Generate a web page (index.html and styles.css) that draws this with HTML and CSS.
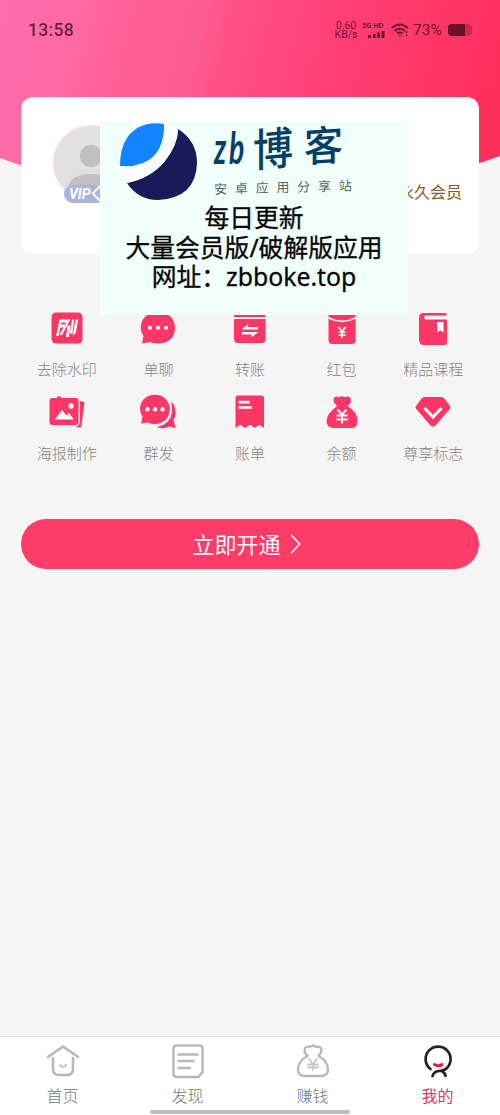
FILE: index.html
```html
<!DOCTYPE html>
<html lang="zh-CN">
<head>
<meta charset="utf-8">
<title>我的</title>
<link rel="stylesheet" href="styles.css">
</head>
<body>
<div class="screen">
  <header class="hero">
    <div class="status">
      <span class="clock">13:58</span>
      <div class="signals">
        <span class="speed">0.60<br>KB/s</span>
        <div class="cell"><span class="net">5G HD</span>
          <svg class="bars" width="17" height="7" viewBox="0 0 17 7"><path d="M0 4h3v3H0zM5 3h2.600v4H5zM9 1.500h3V7H9zM13.500 0h3v7h-3z"/></svg>
        </div>
        <svg class="wifi" width="18" height="14" viewBox="0 0 18 14" fill="none" stroke="currentColor" stroke-width="1.900"><path d="M.8 5q8-7.200 16 0M3.600 8q5.300-4.600 10.400 0M6 10.600q2.800-2.400 5.600 0"/><path d="M7 12h3.600L8.800 13.500z" fill="currentColor" stroke="none"/><path d="M15.500 8v2M15.500 11.500v1.800" stroke-width="1.500"/></svg>
        <span class="pct">73%</span>
        <span class="battery"><span class="charge"></span></span>
      </div>
    </div>
  </header>
  <main>
    <section class="card">
      <div class="avatar">
        <svg width="76" height="78" viewBox="0 0 76 78">
          <circle cx="38" cy="38" r="37" fill="#e1e1e1" stroke="#f8d9df" stroke-width="2"/>
          <circle cx="38" cy="31" r="11" fill="#c0c0c0"/>
          <path d="M15 67V63Q17 49 38 49T61 63V67Q38 82 15 67z" fill="#c0c0c0"/>
        </svg>
        <span class="vip">VIP<i class="gem"></i></span>
      </div>
      <span class="member">永久会员</span>
    </section>
    <section class="grid">
      <div class="item"><svg viewBox="0 0 36 36"><rect x="2.500" y="2.500" width="31" height="31" rx="4.500" fill="#fc3766"/><g fill="#fff"><path d="M10.500 9.500h8l-1 3h-5l-.5 2h4l-1.500 3h-3.200L9.700 26H7z"/><path d="M19 9h2.500L13 25h-2.500zM18.500 15.500h3L20 27h-3zM23 9.500h2l-1.500 14H21zM26.500 9.500h2.700L26.700 23l-3 3z"/></g></svg><span>去除水印</span></div>
      <div class="item"><svg viewBox="0 0 36 36"><path fill="#fc3766" d="M18 2C28 2 35 8 35 18S28 33.500 18 33.500Q13.500 33.500 10 32L2 33.500 3.500 26Q.7 22 .7 18C.7 8 8 2 18 2z"/><g fill="#fff"><circle cx="10" cy="17.700" r="2"/><circle cx="18" cy="17.700" r="2"/><circle cx="26" cy="17.700" r="2"/></g></svg><span>单聊</span></div>
      <div class="item"><svg viewBox="0 0 36 36"><path fill="#fc3766" d="M5 3h26q2.500 0 2.500 3v1H2V6q0-3 3-3zM2 9h31.500v20q0 4-4 4H6q-4 0-4-4z"/><path fill="#fff" d="M9.500 19.500L16.500 14l-.8 3H26v2.500zM26.500 22H10v2.500h10L19 27.500z"/></svg><span>转账</span></div>
      <div class="item"><svg viewBox="0 0 36 36"><path fill="#fc3766" d="M4.500 3h27v4q-13 7-27 0zM4.500 8.800q13.500 7 27 0V30q0 4-4 4h-19q-4 0-4-4z"/><path d="M14.500 17l3.500 4.500 3.500-4.500M14.500 22h7M14.500 25h7M18 21.500V28" fill="none" stroke="#fff" stroke-width="1.700"/></svg><span>红包</span></div>
      <div class="item"><svg viewBox="0 0 36 36"><path fill="#fc3766" d="M8.500 3H31l1 1.200-1.200 1.300H11q-1.800 0-1.800 2T11 9.500h21V33l-1.500 2H9q-5 0-5-5V8q0-5 4.500-5z"/><path fill="#fff" d="M22 12h6.500v10.500l-3.200-2-3.300 2z"/></svg><span>精品课程</span></div>
      <div class="item"><svg viewBox="0 0 36 36"><path fill="#fc3766" d="M8 2.500h4V4H8zM3 4h24q2.500 0 2.500 2.500V28q0 3-3 3H3.500q-3 0-3-3V6.500Q.5 4 3 4zM31 7l4.500 1-3.200 24q-.3 2-2.300 1.600l-3.500-.6Q30.500 32 31 27z"/><path fill="#fff" d="M6 25.500l7-9.500 4.500 5.500 2.500-2.500 4.800 6.500z"/><circle cx="22" cy="12" r="2.700" fill="#fff"/></svg><span>海报制作</span></div>
      <div class="item"><svg viewBox="0 0 36 36"><path fill="#fc3766" d="M31 7.500Q36 11.500 35.500 19q-.2 4-2 7l2 8-6.500-1.500Q23 35.500 16.500 33 31 30 32 17 32.300 11 31 7.500zM15 .8c8.500 0 14.700 6 14.700 14.500S23.500 30 15 30q-4 0-7-1.600L1 29.500l1.500-6.700Q0 19.500 0 15C0 6.700 6.500.8 15 .8z"/><g fill="#fff"><circle cx="7.300" cy="15.300" r="2.200"/><circle cx="15" cy="15.300" r="2.200"/><circle cx="22.500" cy="15.300" r="2.200"/></g></svg><span>群发</span></div>
      <div class="item"><svg viewBox="0 0 36 36"><path fill="#fc3766" d="M5 1.500h25q2 0 2 2.500v30l-4.700-3.300-4.500 3.300-4.700-3.300L13 34l-4.700-3.300L3.500 34V4q0-2.500 1.500-2.500z"/><path d="M6.500 8.200h11M6.500 13.500H20" stroke="#fff" stroke-width="2.700"/></svg><span>账单</span></div>
      <div class="item"><svg viewBox="0 0 36 36"><path fill="#fc3766" d="M11 3q2.500-1 4 .3Q18 1 21 3.300 24 1.500 26.500 4L27 8l-3.500 4Q33.500 18 33.500 26.500T26 34H10Q2.500 34 2.500 27T13 12L9.500 8 10 4z"/><path d="M13.500 15.500L18 20.500l4.500-5M12.500 21.500h11M12.500 25.500h11M18 20.500v9" fill="none" stroke="#fff" stroke-width="2"/></svg><span>余额</span></div>
      <div class="item"><svg viewBox="0 0 36 36"><path fill="#fc3766" d="M9.500 3h17q1.500 0 2.500 1l6 8q1 1.300 0 2.800L20.500 31.500q-2.500 2.300-5 0L1 14.800Q0 13.300 1 12l6-8Q8 3 9.500 3z"/><path d="M9.500 14l8.500 9 8.500-9" fill="none" stroke="#fff" stroke-width="3"/></svg><span>尊享标志</span></div>
    </section>
    <div class="open"><span>立即开通</span><svg width="13" height="20" viewBox="0 0 13 20"><path d="M2 .7L10.700 10 2 19.300" fill="none" stroke="#fff" stroke-width="1.500"/></svg></div>
  </main>
  <nav class="tabs">
    <div class="tab"><svg viewBox="0 0 36 36" fill="none" stroke="#b8b8b8" stroke-width="2.600" stroke-linecap="round" stroke-linejoin="round"><path d="M3 14L18 3.500 33 14M8 15v11q0 6 6 6h8q6 0 6-6V15"/><path d="M15 22q3 4 6 0" stroke-width="1.700"/></svg><span>首页</span></div>
    <div class="tab"><svg viewBox="0 0 36 36" fill="none" stroke="#b8b8b8" stroke-width="2.500" stroke-linecap="round"><path d="M6.500 2.500h23q3 0 3 3V29L28.500 34h-22q-3 0-3-3V5.500q0-3 3-3z"/><path d="M8.500 11.500h19M8.500 18h15M8.500 25h11.500"/></svg><span>发现</span></div>
    <div class="tab"><svg viewBox="0 0 36 36" fill="none" stroke="#b8b8b8" stroke-width="2.300" stroke-linecap="round" stroke-linejoin="round"><path d="M10 5q2-2 4.500-1Q18 1.500 21.500 4 24 3 26 5L26.500 9l-3 4Q33 18 33 26.500 33 33 26 33H10q-7 0-7-6.500Q3 18 12.500 13l-3-4z"/><path stroke="#c7c7c7" stroke-width="1.800" d="M14 16l4 5 4-5M13 21.500h10M13 24.500h10M18 21v6"/></svg><span>赚钱</span></div>
    <div class="tab active"><svg viewBox="0 0 36 36" fill="none" stroke="#222" stroke-width="2.700" stroke-linecap="round"><path d="M10.500 26A12.500 12.500 0 1 1 25 26.500Q22.500 28 18.500 28 14 28.500 12.500 33M22.500 28.500Q25 30 25.500 33"/><path d="M14.500 21.500q4 2.500 7.500 0" stroke="#ed174f" stroke-width="3"/></svg><span>我的</span></div>
  </nav>
  <div class="home-bar"></div>
  <aside class="notice">
    <div class="brand">
      <svg width="80" height="78" viewBox="0 0 80 78"><path d="M0 43Q0 20 12 9 24-2 44 1 45 20 35 32 23 45 0 43z" fill="#1384ff"/><path d="M38 77Q18 77 7 60 31 55 45 38 58 21 58 6 77 18 77 40 76 75 38 77z" fill="#1a1a58"/><path d="M0 43Q23 45 35 32 45 20 44 1L58 6Q58 21 45 38 31 55 7 60 1 54 0 43z" fill="#fcfeff"/></svg>
      <div class="names">
        <div class="script"><span class="latin">zb</span><span class="bo">博</span><span class="ke">客</span></div>
        <div class="slogan">安卓应用分享站</div>
      </div>
    </div>
    <p>每日更新<br>大量会员版/破解版应用<br>网址：zbboke.top</p>
  </aside>
</div>
</body>
</html>
```
FILE: styles.css
```css
* { box-sizing: border-box; }
body { margin: 0; font-family: "Noto Sans", "Noto Sans CJK SC", sans-serif; }
svg { display: block; flex: none; }
.screen { position: relative; width: 500px; height: 1115px; background: #f5f5f5; overflow: hidden; display: flex; flex-direction: column; }
.hero { height: 190px; background: linear-gradient(104deg, #ff6cab 0%, #ff6aa5 15%, #ff6298 21%, #fb5d93 37%, #ff4f87 44%, #ff3e75 65%, #ff3767 80%, #ff2d59 98%); clip-path: polygon(0 0, 100% 0, 100% 156px, 96% 163px, 85% 176px, 70% 186px, 50% 190px, 30% 186px, 15% 177px, 4% 165px, 0 158px); flex: none; }
.status { height: 60px; padding: 0 28px 0 28px; display: flex; align-items: center; justify-content: space-between; color: rgba(65, 8, 34, .78); }
.clock { font: 500 17.500px/24px Roboto, sans-serif; letter-spacing: .3px; }
.signals { display: flex; align-items: center; }
.speed { width: 24px; margin-right: 4px; font: 400 10.500px/9px Roboto, sans-serif; text-align: center; }
.cell { width: 23px; margin-right: 6px; }
.net { display: block; font: bold 7.500px/8px Roboto, sans-serif; white-space: nowrap; }
.bars { margin: 1px 0 0 6px; fill: currentColor; }
.wifi { margin-right: 4px; }
.pct { width: 32px; font: 400 15.500px/20px Roboto, sans-serif; }
.battery { width: 24px; height: 12px; margin: 0 0 0 3px; border-radius: 4px; background: rgba(90, 8, 35, .28); overflow: hidden; }
.charge { display: block; width: 17px; height: 12px; background: rgba(75, 8, 32, .75); }
main { position: relative; margin-top: -93px; padding: 0 21px; flex: 1; }
.card { height: 157px; background: #fff; border-radius: 12px; padding: 28px 17px 0 32px; display: flex; justify-content: space-between; }
.avatar { position: relative; width: 76px; height: 78px; }
.vip { position: absolute; left: 11px; top: 60px; width: 57px; height: 18px; padding-left: 5px; border-radius: 9px; background: #a9b5dc; color: #fff; font: italic bold 14px/19px Roboto, sans-serif; }
.gem { position: absolute; left: 30px; top: 2px; width: 13px; height: 13px; border: 2px solid #fff; transform: rotate(45deg); }
.member { margin-top: 54px; font-size: 16px; line-height: 26px; color: #8b5a20; }
.grid { margin-top: 56px; display: grid; grid-template-columns: repeat(5, 1fr); grid-auto-rows: 84px; }
.item { display: flex; flex-direction: column; align-items: center; font-size: 15px; line-height: 24px; font-weight: 300; color: #858585; }
.item svg { width: 36px; height: 36px; margin-bottom: 11px; }
.open { height: 50px; margin-top: 41px; border-radius: 25px; background: #ff3b68; color: #fff; display: flex; align-items: center; justify-content: center; gap: 8px; font-size: 22px; line-height: 50px; padding-right: 6px; }
.tabs { height: 79px; flex: none; background: #fff; border-top: 1px solid #e5e5e5; display: grid; grid-template-columns: repeat(4, 1fr); }
.tab { display: flex; flex-direction: column; align-items: center; padding-top: 6px; font-size: 16px; line-height: 24px; font-weight: 300; color: #777; }
.tab svg { width: 36px; height: 36px; margin-bottom: 5px; }
.tab.active { color: #ec3565; font-weight: 400; }
.home-bar { position: absolute; left: 150px; top: 1110px; width: 200px; height: 4px; border-radius: 2px; background: #bdbdbd; }
.notice { position: absolute; left: 100px; top: 121px; width: 308px; height: 194px; background: #f1fffb; }
.brand { height: 82px; padding: 2px 0 0 20px; display: flex; gap: 14px; }
.names { width: 150px; }
.script { display: flex; align-items: center; height: 50px; color: #073e67; font-weight: 500; }
.latin { width: 39px; font: italic bold 43px/50px Lato, sans-serif; letter-spacing: 4px; transform: scaleX(.66); transform-origin: left; }
.bo { width: 51px; font-size: 40px; line-height: 48px; transform: skewY(-5deg) scaleY(1.120); }
.ke { font-size: 39px; line-height: 46px; transform: translateY(-3px) skewY(-4deg) scaleY(1.060); }
.slogan { font-size: 13px; line-height: 20px; letter-spacing: 7.800px; color: #526765; white-space: nowrap; transform: rotate(-1.500deg); margin-top: 4px; }
.notice p { margin: 0; text-align: center; font-size: 24.800px; line-height: 29.500px; color: #050505; font-weight: 400; -webkit-text-stroke: .3px #050505; white-space: nowrap; }
```
